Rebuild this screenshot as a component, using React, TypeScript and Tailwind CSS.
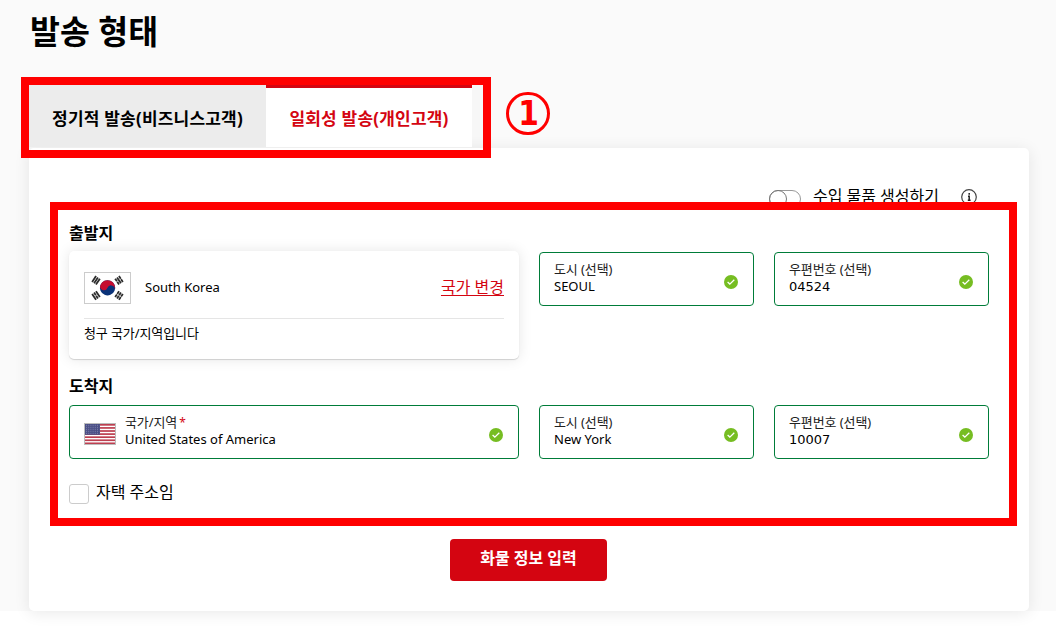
import {FC, ReactNode} from "react";
import clsx from "clsx";

const CheckIcon: FC<{className?: string}> = ({className}) => (
  <svg viewBox="0 0 14 14" className={clsx("w-3.5 h-3.5 shrink-0", className)}>
    <circle cx="7" cy="7" r="7" fill="#76bd22"/>
    <path d="M3.6 7.1 5.8 9.1 10.3 4.8" fill="none" stroke="#fff" strokeWidth="1.3"/>
  </svg>
);

const InfoIcon: FC = () => (
  <svg viewBox="0 0 16 16" className="w-4 h-4 shrink-0">
    <circle cx="8" cy="8" r="7.3" fill="none" stroke="#444" strokeWidth="1.2"/>
    <path d="M8.2 4v1.7M7 7.2h1.2v4M6.8 11.2h2.8" fill="none" stroke="#222" strokeWidth="1.5"/>
  </svg>
);

const trigrams = [
  {x: 12, y: 8.3, angle: -56, broken: [false, false, false]},
  {x: 35, y: 8.3, angle: 56, broken: [true, false, true]},
  {x: 12, y: 23.5, angle: 56, broken: [false, true, false]},
  {x: 35, y: 23.5, angle: -56, broken: [true, true, true]},
];

const KoreaFlag: FC = () => (
  <svg viewBox="0 0 47 32" className="w-[47px] h-8 shrink-0">
    <rect x="0.5" y="0.5" width="46" height="31" fill="#fff" stroke="#ccc"/>
    <g transform="rotate(22 23.5 15.8)">
      <circle cx="23.5" cy="15.8" r="7.6" fill="#0a3278"/>
      <path d="M15.9 15.8a7.6 7.6 0 0 1 15.2 0 3.8 3.8 0 0 0-7.6 0 3.8 3.8 0 0 1-7.6 0Z" fill="#c60c30"/>
    </g>
    {trigrams.map(({x, y, angle, broken}) => (
      <g key={`${x}-${y}`} transform={`translate(${x} ${y}) rotate(${angle})`} stroke="#2b2b2b" strokeWidth="1.8">
        {broken.map((isBroken, i) => (
          <path key={i} d={isBroken ? "M-3.5 0h3.2M.3 0h3.2" : "M-3.5 0h7"} transform={`translate(0 ${(i - 1) * 2.3})`}/>
        ))}
      </g>
    ))}
  </svg>
);

const UsaFlag: FC = () => (
  <svg viewBox="0 0 32 22" className="w-8 h-[22px] shrink-0">
    <rect width="32" height="22" fill="#fff"/>
    {[0, 1, 2, 3, 4, 5, 6].map((i) => (
      <rect key={i} x="1" y={1 + i * 3.08} width="30" height="1.7" fill="#bd3f50"/>
    ))}
    <rect x="1" y="1" width="15" height="10.8" fill="#4b4f86"/>
    {[2, 4, 6, 8, 10].map((y) => (
      <path key={y} d={`M2 ${y + 0.3}h13.5`} stroke="#8c8fb4" strokeWidth="0.8" strokeDasharray="1 1.2"/>
    ))}
    <rect x="0.5" y="0.5" width="31" height="21" fill="none" stroke="#bcbcbc"/>
  </svg>
);

interface FieldProps {
  label: string;
  value: string;
  required?: boolean;
  numeric?: boolean;
  icon?: ReactNode;
  className?: string;
}

const Field: FC<FieldProps> = ({label, value, required, numeric, icon, className}) => (
  <div className={clsx("flex h-[54px] rounded border border-[#007c39] bg-white pr-[15px] pl-3.5", className)}>
    {icon && <div className="mt-[17px] mr-[9px]">{icon}</div>}
    <div className="flex-1 pt-2">
      <div className="h-4 text-[13px] leading-4 tracking-[-0.1px] text-[#222]">
        {label}{required && <span className="ml-0.5 text-xs text-[#d40511]">*</span>}
      </div>
      <div
        className={clsx(
          "text-[13px]",
          numeric ? "font-['DejaVu_Sans',sans-serif] leading-5" : "leading-[18px]",
        )}
      >
        {value}
      </div>
    </div>
    <CheckIcon className="mt-[22px]"/>
  </div>
);

const App: FC = () => (
  <div className="relative h-[639px] w-[1056px] overflow-hidden bg-white font-['Noto_Sans','Noto_Sans_CJK_KR',sans-serif] text-black">
    <div className="h-[611px] bg-[#fafafa] px-[29px] pt-2">
      <h1 className="h-[77px] pl-px text-[32.5px] leading-12 font-bold">발송 형태</h1>

      <div className="flex h-[63px] w-[454px] bg-[#f7f7f7] text-[17px] font-bold tracking-[0.2px]">
        <div className="flex h-[62px] w-[237px] items-center justify-center bg-[#ececec] pt-1.5">정기적 발송(비즈니스고객)</div>
        <div className="flex h-[62px] w-[206px] items-center justify-center border-t-3 border-[#d40511] bg-white pt-[3px] text-[#d40511]">
          일회성 발송(개인고객)
        </div>
      </div>

      <div className="h-[463px] w-[1000px] rounded-[5px] bg-white px-10 pt-[38px] shadow-[0_2px_16px_rgba(0,0,0,0.09)]">
        <div className="flex h-[35px] items-start justify-end pr-3">
          <div className="mt-1 h-[18px] w-8 rounded-full border border-[#999]">
            <div className="-mt-px -ml-px h-[18px] w-[18px] rounded-full border border-[#777]"/>
          </div>
          <span className="mr-[22px] ml-3 text-base leading-5">수입 물품 생성하기</span>
          <div className="mt-[3px]"><InfoIcon/></div>
        </div>

        <h2 className="h-[30px] text-base leading-6 font-bold">출발지</h2>
        <div className="flex h-[129px] items-start gap-5">
          <div className="h-[108px] w-[450px] rounded-[5px] bg-white px-[15px] pt-[21px] shadow-[0_1px_1px_rgba(0,0,0,0.15),0_0_14px_rgba(0,0,0,0.1)]">
            <div className="flex h-[47px] items-start border-b border-[#e5e5e5]">
              <KoreaFlag/>
              <span className="ml-3.5 text-[13px] leading-[30px]">South Korea</span>
              <a className="ml-auto text-base leading-[30px] text-[#d40511] underline underline-offset-2">국가 변경</a>
            </div>
            <div className="pt-[5px] text-[13px] leading-[18px] tracking-[-0.1px]">청구 국가/지역입니다</div>
          </div>
          <Field label="도시 (선택)" value="SEOUL" className="mt-px w-[215px]"/>
          <Field label="우편번호 (선택)" value="04524" numeric className="mt-px w-[215px]"/>
        </div>

        <h2 className="-mt-1 mb-1 h-[25px] text-base leading-5 font-bold">도착지</h2>
        <div className="flex gap-5">
          <Field label="국가/지역" value="United States of America" required icon={<UsaFlag/>} className="w-[450px]"/>
          <Field label="도시 (선택)" value="New York" className="w-[215px]"/>
          <Field label="우편번호 (선택)" value="10007" numeric className="w-[215px]"/>
        </div>

        <div className="mt-[21px] flex gap-[7px]">
          <div className="mt-1 h-5 w-5 rounded-[3px] border border-[#ccc]"/>
          <span className="text-base leading-6">자택 주소임</span>
        </div>

        <button className="mt-[35px] ml-[381px] block h-[42px] w-[157px] rounded bg-[#d40511] pb-1 text-base font-bold text-white">
          화물 정보 입력
        </button>
      </div>
    </div>

    <div className="absolute top-[77px] left-[21px] h-[81px] w-[470px] border-8 border-[#ff0000]"/>
    <div className="absolute top-[202px] left-[50px] h-[324px] w-[967px] border-8 border-[#ff0000]"/>
    <div className="absolute top-[92px] left-[506px] flex h-[43px] w-11 items-center justify-center rounded-full border-3 border-[#ff0000] text-[#ff0000]">
      <span className="scale-x-90 font-['DejaVu_Sans',sans-serif] text-[33px] leading-none font-bold">1</span>
    </div>
  </div>
);

export default App;
